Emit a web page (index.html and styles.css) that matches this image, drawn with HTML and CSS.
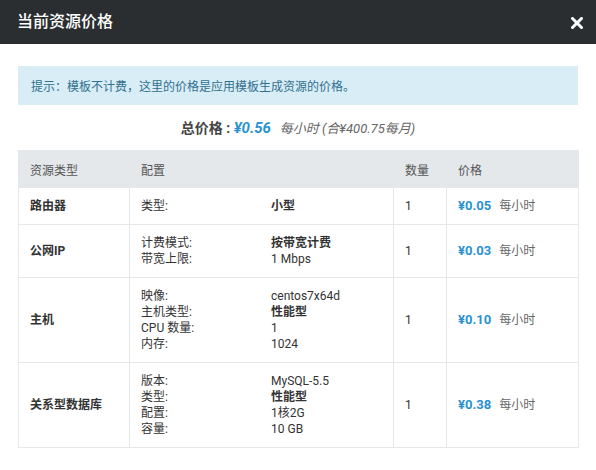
FILE: index.html
```html
<!DOCTYPE html>
<html lang="zh">
<head>
<meta charset="utf-8">
<link rel="stylesheet" href="styles.css">
</head>
<body>
<div class="modal">
  <div class="modal-header">
    <h3 class="modal-title">当前资源价格</h3>
    <svg class="close" width="12" height="12" viewBox="0 0 12 12" aria-label="关闭"><path d="M1.5 1.5 L10.5 10.5 M10.5 1.5 L1.5 10.5" stroke="#fff" stroke-width="3" stroke-linecap="square" fill="none"/></svg>
  </div>
  <div class="modal-body">
    <div class="alert">提示：模板不计费，这里的价格是应用模板生成资源的价格。</div>
    <div class="total">
      <span class="total-label">总价格 : </span><span class="total-price">¥0.56</span><span class="total-unit">每小时 (合¥400.75每月)</span>
    </div>
    <table class="price-table">
      <colgroup>
        <col class="c1"><col class="c2"><col class="c3"><col class="c4">
      </colgroup>
      <thead>
        <tr><th>资源类型</th><th>配置</th><th>数量</th><th>价格</th></tr>
      </thead>
      <tbody>
        <tr>
          <td class="type">路由器</td>
          <td><div class="conf"><span>类型:</span><b>小型</b></div></td>
          <td>1</td>
          <td><span class="price">¥0.05</span><span class="unit">每小时</span></td>
        </tr>
        <tr>
          <td class="type">公网IP</td>
          <td><div class="conf"><span>计费模式:</span><b>按带宽计费</b><span>带宽上限:</span><span>1 Mbps</span></div></td>
          <td>1</td>
          <td><span class="price">¥0.03</span><span class="unit">每小时</span></td>
        </tr>
        <tr>
          <td class="type">主机</td>
          <td><div class="conf"><span>映像:</span><span>centos7x64d</span><span>主机类型:</span><b>性能型</b><span>CPU 数量:</span><span>1</span><span>内存:</span><span>1024</span></div></td>
          <td>1</td>
          <td><span class="price">¥0.10</span><span class="unit">每小时</span></td>
        </tr>
        <tr>
          <td class="type">关系型数据库</td>
          <td><div class="conf"><span>版本:</span><span>MySQL-5.5</span><span>类型:</span><b>性能型</b><span>配置:</span><span>1核2G</span><span>容量:</span><span>10 GB</span></div></td>
          <td>1</td>
          <td><span class="price">¥0.38</span><span class="unit">每小时</span></td>
        </tr>
      </tbody>
    </table>
  </div>
</div>
</body>
</html>
```
FILE: styles.css
```css
* { box-sizing: border-box; }
html, body { margin: 0; padding: 0; background: #fff; }
body {
  font-family: Roboto, "Noto Sans CJK SC", sans-serif;
  font-size: 12px;
  color: #333;
  width: 596px;
}
.modal-header {
  height: 44px;
  background: #2b2e30;
  display: flex;
  align-items: center;
  justify-content: space-between;
  padding: 0 13px 0 17px;
}
.modal-title {
  margin: 0;
  color: #fff;
  font-size: 16px;
  font-weight: 500;
  line-height: 1;
}
.close {
  display: block;
  margin-top: 1px;
}
.modal-body {
  padding: 22px 18px 0 18px;
}
.alert {
  background: #d9edf7;
  color: #31708f;
  height: 39px;
  padding: 0 13px;
  display: flex;
  align-items: center;
  font-size: 12px;
}
.total {
  text-align: center;
  margin-top: 14px;
  height: 31px;
  line-height: 18px;
}
.total-label {
  font-size: 14px;
  font-weight: 700;
  color: #444;
}
.total-price {
  font-size: 15px;
  font-weight: 700;
  font-style: italic;
  color: #2a92d0;
  margin-right: 9px;
}
.total-unit {
  font-style: italic;
  color: #666;
  font-size: 13px;
}
.price-table {
  width: 560px;
  border-collapse: collapse;
  table-layout: fixed;
}
.c1 { width: 111px; }
.c2 { width: 264px; }
.c3 { width: 53px; }
.c4 { width: 132px; }
.price-table th {
  background: #e4e8eb;
  color: #555;
  font-weight: 400;
  text-align: left;
  height: 37px;
  padding: 0 11px;
  border: 1px solid #e4e8eb;
}
.price-table td {
  border: 1px solid #e4e8eb;
  padding: 10px 11px;
  vertical-align: middle;
  line-height: 16px;
}
.price-table td.type { font-weight: 700; }
.conf {
  display: grid;
  grid-template-columns: 130px 1fr;
}
.conf b { font-weight: 700; }
.price {
  color: #2a92d0;
  font-weight: 700;
  font-size: 13px;
  margin-right: 8px;
}
.unit { color: #666; }
```
